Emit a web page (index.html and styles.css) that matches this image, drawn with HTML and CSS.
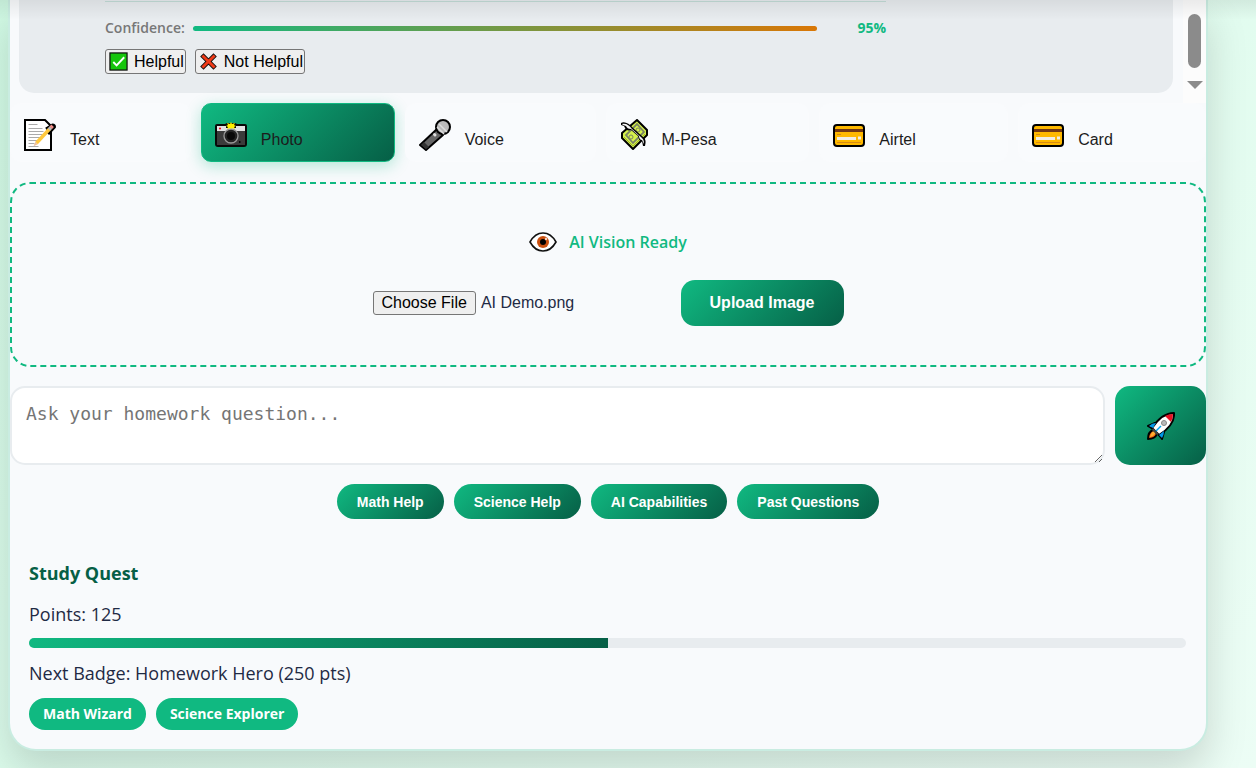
FILE: index.html
```html
<!DOCTYPE html>
<html lang="en">
<head>
<meta charset="utf-8">
<meta name="viewport" content="width=device-width, initial-scale=1">
<title>Homework Assistant</title>
<link rel="stylesheet" href="styles.css">
</head>
<body>
<main class="card">
  <section class="chat" aria-label="Conversation">
    <div class="bubble">
      <div class="feedback">
        <div class="confidence">
          <span class="confidence-label">Confidence:</span>
          <div class="confidence-track"><div class="confidence-fill" style="width:95%"></div></div>
          <span class="confidence-value">95%</span>
        </div>
        <div class="votes">
          <button type="button" class="vote">
            <svg class="vote-icon" viewBox="0 0 20 20" aria-hidden="true"><rect x="1" y="1" width="18" height="18" fill="#16c60c" stroke="#111" stroke-width="1.3"/><path d="M4.5 10.5 8 14l8-8.5" fill="none" stroke="#fff" stroke-width="2"/></svg>
            Helpful</button>
          <button type="button" class="vote">
            <svg class="vote-icon" viewBox="0 0 20 20" aria-hidden="true"><path d="m3 3 14 14M17 3 3 17" stroke="#111" stroke-width="5"/><path d="m3.6 3.6 12.8 12.8M16.4 3.6 3.6 16.4" stroke="#f03a17" stroke-width="3"/></svg>
            Not Helpful</button>
        </div>
      </div>
    </div>
    <div class="scrollbar" aria-hidden="true"><span class="thumb"></span><span class="arrow"></span></div>
  </section>

  <nav class="tabs" aria-label="Input mode">
    <button type="button" class="tab">
      <svg class="tab-icon" viewBox="0 0 32 32" aria-hidden="true"><path d="M1 1h20l6 6v24H1z" fill="#fff" stroke="#000" stroke-width="2"/><path d="M4.500 5.500h9M4.500 9.500h14M4.500 12.500h15M4.500 15.500h14M4.500 18.500h12M4.500 21.500h9M4.500 24.500h6M4.500 27.500h10" stroke="#aaa"/><path d="m22 10 6.500-4q2 0 2 2L24 15" fill="none" stroke="#000" stroke-width="3" stroke-linejoin="round"/><path d="m12.500 24 13-14" stroke="#ffc83d" stroke-width="3.500"/><path d="m25 10.500 2-2" stroke="#bbb" stroke-width="3.500"/><path d="m26.800 8.700 1.800-1.900" stroke="#ef8d88" stroke-width="3.500"/><path d="m11.300 22.700 2.500 2.500-4.300 2z" fill="#eec09c"/></svg>
      <span>Text</span></button>
    <button type="button" class="tab active">
      <svg class="tab-icon" viewBox="0 0 32 32" aria-hidden="true"><path d="M2 5h8l2-1h8l2 1h8q2 0 2 2v18q0 3-3 3H3q-3 0-3-3V7q0-2 2-2z" fill="#080808"/><path d="M2 7h28v5H2z" fill="#e3e3e3"/><path d="M2 12h28v14H2z" fill="#3b3b3b"/><circle cx="16" cy="17" r="7" fill="#222" stroke="#999" stroke-width="1.3"/><circle cx="16" cy="17" r="4" fill="#080808"/><path d="M11 5h10v4H11z" fill="#080808"/><path d="m16 3 1 2 3-1-1 2 2 1-2 1 1 2-3-1-1 1-1-1-3 1 1-2-2-1 2-1-1-2 3 1z" fill="#fff100"/><circle cx="5" cy="9.500" r="1.100" fill="#e81224"/><path d="M24 22h1.500v2H24z" fill="#080808"/></svg>
      <span>Photo</span></button>
    <button type="button" class="tab">
      <svg class="tab-icon" viewBox="0 0 32 32" aria-hidden="true"><path d="m1 26 17-16 6 6L7 31z" fill="#666" stroke="#000" stroke-width="2" stroke-linejoin="round"/><path d="m2 26 3-3 5 5-3 2z" fill="#333"/><circle cx="24" cy="8" r="7" fill="#bbb" stroke="#000" stroke-width="2"/><path d="m18 8 7 7M20 5l8 8" stroke="#ddd" stroke-width="1.500"/><path d="m15.500 15.500 .5.5" stroke="#ddd" stroke-width="3" stroke-linecap="round"/></svg>
      <span>Voice</span></button>
    <button type="button" class="tab">
      <svg class="tab-icon narrow" viewBox="0 0 28 32" aria-hidden="true"><path d="m17 1 10 10v5L13 30 2 19v-5z" fill="#d5f04b" stroke="#000" stroke-width="2" stroke-linejoin="round"/><path d="m17 5 7 8-11 11-7-8z" fill="none" stroke="#7b8465" stroke-width="1.800"/><circle cx="18" cy="11" r="2" fill="#d5f04b" stroke="#7b8465"/><circle cx="11" cy="18" r="2" fill="#d5f04b" stroke="#7b8465"/><path d="m5 27 8 0" stroke="none"/><path d="M4 18 13 27 25 15" fill="none" stroke="#9db528"/><path d="M1 4c3-2 8 0 12 5l10 9c3 2 3 5 2 9h-2l-1-5c-3 0-3-2-4-5l-7-6c-3 1-5 0-6-2l-1-2-3-1z" fill="#000"/><path d="M2 5c4-1 7 1 10 5l10 9c2 2 2 4 2 6l-2-4c-2 0-3-2-3-4l-8-7c-3 0-4-1-5-3L3 6z" fill="#f4f4f4"/></svg>
      <span>M-Pesa</span></button>
    <button type="button" class="tab">
      <svg class="tab-icon" viewBox="0 0 32 32" aria-hidden="true"><rect x="1" y="6" width="30" height="21" rx="3" fill="#ffb900" stroke="#000" stroke-width="2"/><path d="M2 10h28v3H2z" fill="#713714"/><path d="M4 15.500h4M4 23.500h24" stroke="#d68a16"/><path d="M4 19.500h19M25 19h3" stroke="#f1eee5" stroke-width="3"/></svg>
      <span>Airtel</span></button>
    <button type="button" class="tab">
      <svg class="tab-icon" viewBox="0 0 32 32" aria-hidden="true"><rect x="1" y="6" width="30" height="21" rx="3" fill="#ffb900" stroke="#000" stroke-width="2"/><path d="M2 10h28v3H2z" fill="#713714"/><path d="M4 15.500h4M4 23.500h24" stroke="#d68a16"/><path d="M4 19.500h19M25 19h3" stroke="#f1eee5" stroke-width="3"/></svg>
      <span>Card</span></button>
  </nav>

  <section class="dropzone">
    <div class="vision">
      <svg class="eye" viewBox="0 0 28 20" aria-hidden="true"><path d="M1 10Q6 1 14 1t13 9q-5 9-13 9T1 10z" fill="#fff" stroke="#111" stroke-width="1.600"/><circle cx="14" cy="10" r="6" fill="#ca5010"/><circle cx="14" cy="10" r="3" fill="#000"/><circle cx="17" cy="7" r="1.200" fill="#f4d6c7"/></svg>
      <span>AI Vision Ready</span>
    </div>
    <div class="upload">
      <div class="file">
        <input type="file" id="photo" class="file-input" accept="image/*">
        <label for="photo" class="file-button">Choose File</label>
        <span>AI Demo.png</span>
      </div>
      <button type="button" class="upload-button">Upload Image</button>
    </div>
  </section>

  <form class="ask">
    <textarea class="question" aria-label="Homework question" placeholder="Ask your homework question..."></textarea>
    <button type="button" class="send" aria-label="Send question">
      <svg class="rocket" viewBox="0 0 28 28" aria-hidden="true"><path d="m8 11-7 3 5 3zM17 20l-2 7-4-5z" fill="#0099e8" stroke="#000" stroke-width="2" stroke-linejoin="round"/><path d="M1 27q0-7 5-9l4 4q-2 5-9 5z" fill="#f7630c" stroke="#000" stroke-width="2" stroke-linejoin="round"/><path d="M3 25q1-5 4-6l2 2q-2 3-6 4z" fill="#ffad32"/><path d="M27 1q1 12-15 22l-7-7Q15 1 27 1z" fill="#fff" stroke="#000" stroke-width="2" stroke-linejoin="round"/><path d="M9 11q-4 0-7 3l4 2zM17 19q0 4-2 7l-3-3z" fill="#0099e8"/><path d="M26 2q0 4-2 8l-6-6q4-2 8-2z" fill="#e81224"/><path d="m6 16 6 6-2 1-5-5z" fill="#444"/><circle cx="17" cy="11" r="2.500" fill="#bbb" stroke="#888"/><path d="m9 19 5-5" stroke="#00a4ef" stroke-width="1.500"/></svg>
    </button>
  </form>

  <div class="quick">
    <button type="button" class="pill">Math Help</button>
    <button type="button" class="pill">Science Help</button>
    <button type="button" class="pill">AI Capabilities</button>
    <button type="button" class="pill">Past Questions</button>
  </div>

  <section class="quest">
    <h2 class="quest-title">Study Quest</h2>
    <p class="quest-text">Points: 125</p>
    <div class="progress" role="progressbar" aria-valuenow="125" aria-valuemin="0" aria-valuemax="250" aria-label="Points"><div class="progress-fill" style="width:50%"></div></div>
    <p class="quest-text">Next Badge: Homework Hero (250 pts)</p>
    <div class="badges"><span class="badge">Math Wizard</span><span class="badge">Science Explorer</span></div>
  </section>
</main>
</body>
</html>
```
FILE: styles.css
```css
* { box-sizing: border-box; }

body {
  margin: 0;
  min-height: 100vh;
  padding: 0 48px 17px 8px;
  overflow: hidden;
  background: linear-gradient(135deg, #d1fae5, #ecfdf5);
  color: #1f2a44;
  font-family: "Segoe UI", "Open Sans", "Noto Sans", sans-serif;
  font-size: 18px;
}

body::before {
  content: "";
  position: absolute;
  inset: 0 0 auto;
  height: 20px;
  background: linear-gradient(rgba(0, 0, 0, .07), rgba(0, 0, 0, 0));
  pointer-events: none;
}

button { font-family: "Liberation Sans", Arial, sans-serif; cursor: pointer; }

.card {
  border: 2px solid #c9ece1;
  border-top: 0;
  border-radius: 0 0 28px 28px;
  background: #f8fafc;
  box-shadow: 0 20px 40px rgba(0, 0, 0, .15);
}

.chat { display: flex; justify-content: space-between; }
.bubble {
  flex: 1;
  margin: 0 10px 10px 9px;
  padding: 1px 86px 19px;
  border-radius: 0 0 15px 15px;
  background: #e8ecef;
}
.feedback { max-width: 781px; border-top: 1px solid #c3dcd7; }
.confidence {
  display: flex;
  align-items: center;
  gap: 8px;
  padding-top: 16px;
  font-size: 14px;
  line-height: 20px;
}
.confidence-label { color: #777; font-weight: 600; }
.confidence-track { flex: 1; }
.confidence-fill {
  height: 5px;
  border-radius: 3px;
  background: linear-gradient(90deg, #10b981, #d97706);
}
.confidence-value { color: #10b981; font-weight: 700; }
.votes { display: flex; gap: 9px; padding-top: 11px; }
.vote {
  display: flex;
  align-items: center;
  gap: 6px;
  height: 25px;
  padding: 0 1px 0 3px;
  border: 1px solid #767676;
  border-radius: 3px;
  background: #efefef;
  color: #000;
  font-size: 16px;
}
.vote-icon { width: 19px; height: 19px; }

.scrollbar {
  display: flex;
  flex-direction: column;
  align-items: center;
  width: 23px;
  padding-top: 14px;
  background: #fcfcfc;
}
.thumb { width: 13px; height: 54px; border-radius: 7px; background: #8b8b8b; }
.arrow {
  margin-top: 13px;
  border: solid transparent;
  border-width: 8px 8px 0;
  border-top-color: #8b8b8b;
}

.tabs {
  display: grid;
  grid-template-columns: 181fr 194fr 191fr 204fr 189fr 188fr;
  gap: 10px;
}
.tab {
  display: flex;
  align-items: flex-end;
  gap: 14px;
  height: 59px;
  padding: 0 13px 9px;
  border: 1px solid #fafbfd;
  border-radius: 10px;
  background: #f9fbfd;
  color: #1c1c1c;
  font-size: 16px;
  line-height: 24px;
}
.tab-icon { width: 32px; height: 32px; margin-bottom: 1px; }
.tab-icon.narrow { width: 28px; }
.tab.active {
  border-color: #10b981;
  background: linear-gradient(135deg, #10b981, #065f46);
  box-shadow: 0 4px 15px rgba(16, 185, 129, .3);
}

.dropzone {
  margin-top: 20px;
  padding: 44px 20px 39px;
  border: 2px dashed #10b981;
  border-radius: 20px;
}
.vision {
  display: flex;
  align-items: center;
  justify-content: center;
  gap: 12px;
  color: #10b981;
  font-size: 16px;
  font-weight: 600;
  line-height: 28px;
}
.eye { width: 28px; height: 20px; }
.upload {
  display: flex;
  align-items: center;
  justify-content: center;
  gap: 10px;
  margin-top: 24px;
}
.file {
  position: relative;
  display: flex;
  align-items: center;
  gap: 5px;
  width: 298px;
  font: 16px "Liberation Sans", Arial, sans-serif;
}
.file-input { position: absolute; width: 1px; height: 1px; opacity: 0; }
.file-button {
  padding: 0 8px;
  border: 1px solid #767676;
  border-radius: 3px;
  background: #efefef;
  color: #000;
  line-height: 22px;
  cursor: pointer;
}
.upload-button {
  width: 163px;
  height: 46px;
  border: 0;
  border-radius: 14px;
  background: linear-gradient(135deg, #10b981, #065f46);
  color: #fff;
  font-size: 16px;
  font-weight: 700;
}

.ask { display: flex; gap: 10px; margin-top: 19px; }
.question {
  flex: 1;
  height: 79px;
  padding: 14px;
  border: 2px solid #e8ecef;
  border-radius: 15px;
  background: #fff;
  color: #1f2a44;
  font: 18px/24px "DejaVu Sans Mono", monospace;
  resize: vertical;
}
.question::placeholder { color: #757575; }
.send {
  display: grid;
  place-items: center;
  width: 91px;
  border: 0;
  border-radius: 15px;
  background: linear-gradient(135deg, #10b981, #065f46);
}
.rocket { width: 28px; height: 28px; }

.quick { display: flex; justify-content: center; gap: 10px; margin-top: 19px; }
.pill {
  height: 35px;
  padding: 0 20px;
  border: 0;
  border-radius: 18px;
  background: linear-gradient(135deg, #10b981, #065f46);
  color: #fff;
  font-size: 14px;
  font-weight: 700;
}

.quest { margin-top: 20px; padding: 20px 20px 19px 19px; }
.quest-title {
  margin: 0 0 13px;
  color: #065f46;
  font-size: 18px;
  font-weight: 700;
  line-height: 28px;
}
.quest-text { margin: 0; line-height: 28px; }
.progress {
  height: 10px;
  margin: 10px 0 11px;
  overflow: hidden;
  border-radius: 5px;
  background: #e8ecef;
}
.progress-fill { height: 100%; background: linear-gradient(135deg, #10b981, #065f46); }
.badges { display: flex; gap: 10px; margin-top: 11px; }
.badge {
  padding: 0 14px;
  border-radius: 16px;
  background: #10b981;
  color: #fff;
  font-size: 14px;
  font-weight: 700;
  line-height: 32px;
}
```
